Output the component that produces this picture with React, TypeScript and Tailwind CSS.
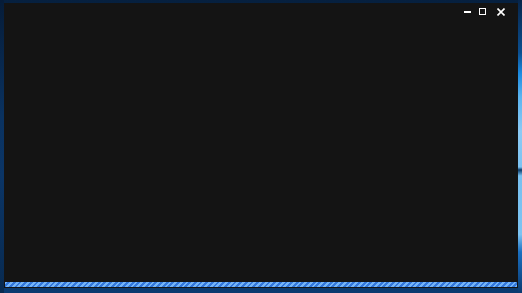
import React from "react";

export default function App() {
  return (
    <div className="w-[522px] h-[293px] overflow-hidden flex bg-[linear-gradient(180deg,#06203f_0%,#082a52_40%,#0a3a70_100%)]">
      <div className="w-[4px] h-full bg-[linear-gradient(180deg,#061c38_0%,#0a3260_40%,#0b3566_60%,#082a50_100%)]" />
      <div className="w-[514px] h-full flex flex-col pt-[3px] pb-[5px]">
        <div className="flex-1 bg-[#141414] flex flex-col">
          <div className="h-[16px] flex items-center justify-end pr-[13px] pt-[1px] text-white">
            <div className="w-[7px] h-[2px] bg-white mr-[8px]" />
            <div className="w-[7px] h-[7px] border border-white mr-[11px]" />
            <svg width="8" height="8" viewBox="0 0 8 8">
              <path d="M0.5 0.5 L7.5 7.5 M7.5 0.5 L0.5 7.5" stroke="white" strokeWidth="1.6" />
            </svg>
          </div>
          <div className="flex-1" />
          <div className="px-[1px] pb-[1px]">
            <div className="h-[5px] bg-[repeating-linear-gradient(135deg,#74b4f7_0px,#74b4f7_2px,#3478dc_2px,#3478dc_4px)]" />
          </div>
        </div>
      </div>
      <div className="w-[4px] h-full bg-[linear-gradient(180deg,#07254a_0%,#0b4f90_18%,#1b8ae0_25%,#5ab4f0_33%,#8ccaf5_45%,#7cc3f2_57%,#0a3a68_58%,#78c0f0_60%,#7cc3f2_80%,#1a6fc0_86%,#0a3a70_100%)]" />
    </div>
  );
}
